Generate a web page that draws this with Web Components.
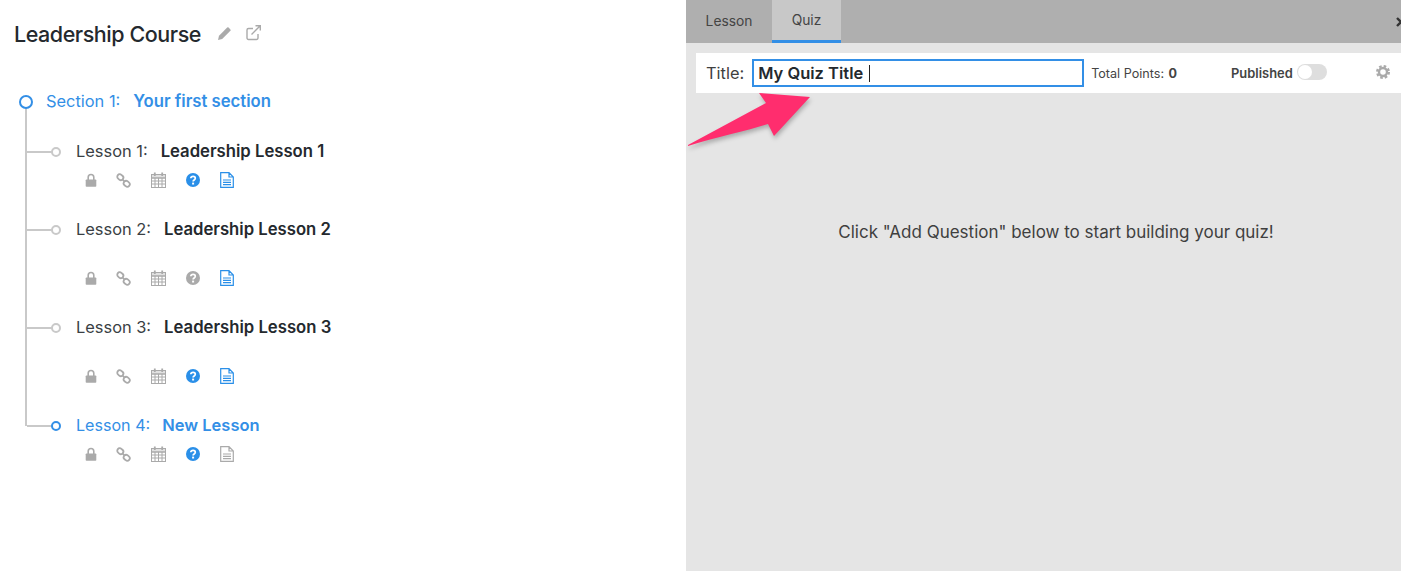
<!DOCTYPE html>
<html>
<head>
<meta charset="utf-8">
<title>Quiz builder</title>
<style>
  html, body { margin: 0; height: 100%; }
  body { font-family: Inter, "Noto Sans", sans-serif; color: #24292e; overflow: hidden; }
</style>
</head>
<body>
<builder-page>
  <course-outline slot="left" heading="Leadership Course">
    <section-row label="Section 1:" name="Your first section"></section-row>
    <lesson-row label="Lesson 1:" name="Leadership Lesson 1" quiz="on" doc="on" gap="11" height="78"></lesson-row>
    <lesson-row label="Lesson 2:" name="Leadership Lesson 2" doc="on" gap="31" height="98"></lesson-row>
    <lesson-row label="Lesson 3:" name="Leadership Lesson 3" quiz="on" doc="on" gap="31" height="98"></lesson-row>
    <lesson-row label="Lesson 4:" name="New Lesson" quiz="on" gap="11" height="60" active></lesson-row>
  </course-outline>
  <quiz-panel slot="right"></quiz-panel>
</builder-page>

<script>
const pageTemplate = document.createElement('template');
pageTemplate.innerHTML = `
  <style>
    :host { display: flex; width: 1401px; height: 571px; position: relative; overflow: hidden; }
    .left { display: block; width: 686px; flex: none; background: #fff; }
    .right { display: block; flex: 1; background: #e5e5e5; }
  </style>
  <div class="left"><slot name="left"></slot></div>
  <div class="right"><slot name="right"></slot></div>
`;
class BuilderPage extends HTMLElement {
  constructor() {
    super();
    this.attachShadow({ mode: 'open' }).appendChild(pageTemplate.content.cloneNode(true));
  }
}
customElements.define('builder-page', BuilderPage);

const outlineTemplate = document.createElement('template');
outlineTemplate.innerHTML = `
  <style>
    :host { display: block; padding: 20px 0 0 14px; }
    .head { display: flex; align-items: center; height: 28px; }
    h1 { margin: 0; font-size: 21.5px; font-weight: 500; letter-spacing: -0.45px; color: #24292e; }
    svg { display: block; fill: #aaa; }
    .edit { margin-left: 16px; margin-top: -2px; }
    .open { margin-left: 13px; margin-top: -3px; }
    .tree { position: relative; margin-top: 40px; }
    .line { position: absolute; left: 11px; top: 20px; width: 2px; height: 318px; background: #c9c9c9; }
  </style>
  <div class="head">
    <h1></h1>
    <svg class="edit" width="15" height="15" viewBox="0 0 15 15"><path d="M1 14l1-4.2L10.200 1.600a1 1 0 0 1 1.400 0l1.800 1.800a1 1 0 0 1 0 1.400L5.200 13z"/></svg>
    <svg class="open" width="17" height="17" viewBox="0 0 17 17" style="fill:none;stroke:#aaa;stroke-width:1.4"><path d="M13 10v4a1.500 1.500 0 0 1-1.500 1.500h-8A1.500 1.500 0 0 1 2 14V6a1.500 1.500 0 0 1 1.500-1.500H8"/><path d="M6.500 10.500L15 2M10.500 1.700h4.800v4.800"/></svg>
  </div>
  <div class="tree">
    <div class="line"></div>
    <slot></slot>
  </div>
`;
class CourseOutline extends HTMLElement {
  constructor() {
    super();
    this.attachShadow({ mode: 'open' }).appendChild(outlineTemplate.content.cloneNode(true));
    this.shadowRoot.querySelector('h1').textContent = this.getAttribute('heading');
  }
}
customElements.define('course-outline', CourseOutline);

const sectionTemplate = document.createElement('template');
sectionTemplate.innerHTML = `
  <style>
    :host { display: flex; align-items: center; height: 26px; margin-bottom: 27px; color: #338fe6; font-size: 16.4px; position: relative; margin-left: 5px; }
    .dot { width: 10px; height: 10px; border: 2px solid #338fe6; border-radius: 50%; background: #fff; flex: none; position: relative; z-index: 1; margin-top: 2px; }
    .label { margin-left: 13px; }
    .name { margin-left: 13px; font-size: 16.7px; font-weight: 600; }
  </style>
  <span class="dot"></span><span class="label"></span><span class="name"></span>
`;
class SectionRow extends HTMLElement {
  constructor() {
    super();
    this.attachShadow({ mode: 'open' }).appendChild(sectionTemplate.content.cloneNode(true));
    this.shadowRoot.querySelector('.label').textContent = this.getAttribute('label');
    this.shadowRoot.querySelector('.name').textContent = this.getAttribute('name');
  }
}
customElements.define('section-row', SectionRow);

const lessonTemplate = document.createElement('template');
lessonTemplate.innerHTML = `
  <style>
    :host { display: block; position: relative; box-sizing: border-box; padding-left: 62px; font-size: 16.4px; color: #3a3f44; }
    .title { display: flex; align-items: center; height: 20px; }
    .name { margin-left: 13px; font-size: 16.7px; font-weight: 600; color: #24292e; }
    .tick { position: absolute; left: 13px; top: 10px; width: 25px; height: 2px; background: #c9c9c9; }
    .dot { position: absolute; left: 37px; top: 6px; width: 6px; height: 6px; border: 2px solid #c9c9c9; border-radius: 50%; background: #fff; }
    :host([active]) { color: #338fe6; font-size: 16.1px; }
    :host([active]) .name { color: #338fe6; margin-left: 12px; font-size: 16.5px; }
    :host([active]) .dot { border-color: #338fe6; }
    .icons { display: flex; align-items: center; margin-left: 8px; }
    svg { display: block; flex: none; }
    .gray { fill: #aaa; }
    .i1 { width: 14px; } .i2 { margin-left: 18px; } .i3 { margin-left: 20px; } .i4 { margin-left: 20px; } .i5 { margin-left: 20px; }
  </style>
  <span class="tick"></span><span class="dot"></span>
  <div class="title"><span class="label"></span><span class="name"></span></div>
  <div class="icons">
    <svg class="i1" width="14" height="14" viewBox="0 0 14 14"><path class="gray" d="M2.500 6.500h9a.8.8 0 0 1 .8.8V13a.8.8 0 0 1-.8.8h-9a.8.8 0 0 1-.8-.8V7.300a.8.8 0 0 1 .8-.8z"/><path d="M4.200 7V4.300a2.800 2.800 0 0 1 5.600 0V7" fill="none" stroke="#aaa" stroke-width="1.600"/></svg>
    <svg class="i2" width="15" height="15" viewBox="0 0 15 15" fill="none" stroke="#aaa" stroke-width="1.800"><rect x="1.100" y="1.700" width="6.400" height="5" rx="2.500" transform="rotate(40 4.300 4.200)"/><rect x="7.500" y="8.300" width="6.400" height="5" rx="2.500" transform="rotate(40 10.700 10.800)"/><path d="M6.200 6.200l2.600 2.600"/></svg>
    <svg class="i3" width="15" height="16" viewBox="0 0 15 16" fill="none" stroke="#aaa" stroke-width="1"><rect x=".5" y="2.500" width="14" height="13"/><path d="M.5 6h14M.5 9h14M.5 12h14M4 6v9.500M7.500 6v9.500M11 6v9.500"/><path d="M3.800 .5v3.500M11.200 .5v3.500" stroke-width="1.800"/><path d="M.5 2.500h14V6H.5z" fill="#aaa" fill-opacity=".35"/></svg>
    <svg class="i4" width="14" height="14" viewBox="0 0 14 14"><circle cx="7" cy="7" r="7" class="q"/><path d="M4.800 5.300C4.900 4 5.900 3.300 7.100 3.300c1.300 0 2.200.8 2.200 1.900 0 1.800-2.200 1.700-2.200 3.300" fill="none" stroke="#fff" stroke-width="1.700"/><rect x="6.100" y="9.600" width="2" height="1.900" fill="#fff"/></svg>
    <svg class="i5" width="14" height="16" viewBox="0 0 14 16" fill="none"><path class="ds" d="M.7.700h8.300l4.300 4.300v10.300H.7zM9 .700V5h4.300M3 8h8M3 10.300h8M3 12.600h8" stroke-width="1.200"/></svg>
  </div>
`;
class LessonRow extends HTMLElement {
  constructor() {
    super();
    this.attachShadow({ mode: 'open' }).appendChild(lessonTemplate.content.cloneNode(true));
    const root = this.shadowRoot;
    root.querySelector('.label').textContent = this.getAttribute('label');
    root.querySelector('.name').textContent = this.getAttribute('name');
    this.style.height = this.getAttribute('height') + 'px';
    root.querySelector('.icons').style.marginTop = this.getAttribute('gap') + 'px';
    root.querySelector('.q').setAttribute('fill', this.getAttribute('quiz') === 'on' ? '#2a8fe8' : '#aaa');
    root.querySelector('.ds').setAttribute('stroke', this.getAttribute('doc') === 'on' ? '#2a8fe8' : '#aaa');
  }
}
customElements.define('lesson-row', LessonRow);

const panelTemplate = document.createElement('template');
panelTemplate.innerHTML = `
  <style>
    :host { display: flex; flex-direction: column; height: 571px; font-size: 14px; color: #3f3f3f; }
    .tabs { display: flex; height: 43px; background: #afafaf; position: relative; overflow: hidden; }
    .tab { display: flex; align-items: center; justify-content: center; box-sizing: border-box; height: 43px; padding-bottom: 1px; color: #444; font-size: 13.8px; }
    .lesson { width: 86px; }
    .quiz { width: 69px; background: #c8c8c8; border-bottom: 3px solid #338fe6; padding-bottom: 0; }
    .close { position: absolute; right: -5px; top: 17px; }
    .bar { display: flex; align-items: center; height: 40px; margin: 10px 0 0 10px; background: #fff; }
    .t { margin-left: 10px; font-size: 16.4px; color: #3f3f3f; }
    .input { box-sizing: border-box; display: flex; align-items: center; width: 332px; height: 28px; margin-left: 8px; padding-left: 4px; border: 2px solid #338fe6; font-size: 16.5px; font-weight: 600; color: #24292e; background: #fff; }
    .caret { width: 1px; height: 17px; margin-left: 6px; background: #222; }
    .points { margin-left: 7px; font-size: 12.600px; color: #444; white-space: nowrap; }
    .points b { font-weight: 700; margin-left: 1px; }
    .pub { margin-left: 54px; font-size: 12.900px; font-weight: 600; color: #444; display: flex; align-items: center; }
    .pub span { margin-top: 1px; }
    .switch { width: 30px; height: 16px; margin-left: 4px; margin-top: -2px; border-radius: 8px; background: #dedede; position: relative; }
    .switch i { position: absolute; left: 1px; top: 1px; width: 14px; height: 14px; border-radius: 50%; background: #fff; }
    .gear { margin-left: auto; margin-right: 11px; margin-top: -2px; display: block; }
    .empty { margin-top: 129px; text-align: center; font-size: 17px; color: #3f3f3f; padding-left: 25px; }
    .arrow { position: absolute; left: 686px; top: 90px; overflow: visible; filter: drop-shadow(1px 3px 2px rgba(0,0,0,.25)); }
  </style>
  <div class="tabs">
    <div class="tab lesson">Lesson</div>
    <div class="tab quiz">Quiz</div>
    <svg class="close" width="10" height="10" viewBox="0 0 10 10" fill="none" stroke="#333" stroke-width="2.400"><path d="M1 1l8 8M9 1L1 9"/></svg>
  </div>
  <div class="bar">
    <span class="t">Title:</span>
    <div class="input">My Quiz Title<span class="caret"></span></div>
    <span class="points">Total Points: <b>0</b></span>
    <div class="pub"><span>Published</span><div class="switch"><i></i></div></div>
    <svg class="gear" width="14" height="14" viewBox="0 0 14 14" fill="none" stroke="#aaa"><circle cx="7" cy="7" r="4" stroke-width="2.400"/><circle cx="7" cy="7" r="5.800" stroke-width="2.400" stroke-dasharray="2.550 2.000"/></svg>
  </div>
  <div class="empty">Click "Add Question" below to start building your quiz!</div>
  <svg class="arrow" width="130" height="60" viewBox="0 0 130 60"><path fill="#ff2d6e" d="M2 55L80 13 73 3l51 4-36 39-6-12C60 41 30 47 2 56z"/></svg>
`;
class QuizPanel extends HTMLElement {
  constructor() {
    super();
    this.attachShadow({ mode: 'open' }).appendChild(panelTemplate.content.cloneNode(true));
  }
}
customElements.define('quiz-panel', QuizPanel);
</script>
</body>
</html>
